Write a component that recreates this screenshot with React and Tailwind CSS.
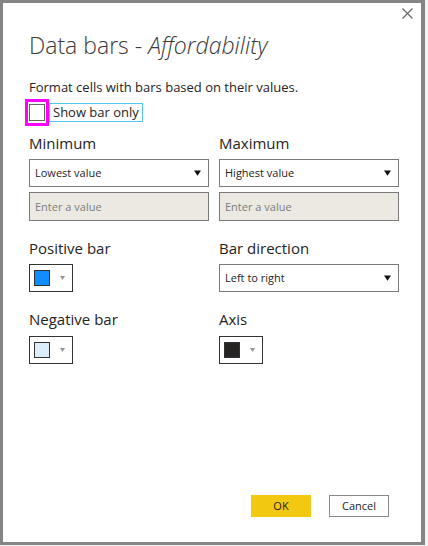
import { useState } from 'react';

const font = { fontFamily: '"Open Sans", "Noto Sans", sans-serif' };

function Caret({ className = '', w = 8, h = 6 }) {
  return (
    <svg width={w} height={h} viewBox="0 0 8 6" className={className}>
      <path d="M0 0 L8 0 L4 6 Z" fill="currentColor" />
    </svg>
  );
}

function Select({ value }) {
  return (
    <div className="flex h-[28px] items-center justify-between border border-[#7a7a7a] bg-white pl-[5px] pr-[7px] text-[11px] text-[#252423]">
      <span>{value}</span>
      <Caret className="text-[#111]" w={7} h={6} />
    </div>
  );
}

function ValueInput() {
  return (
    <input
      placeholder="Enter a value"
      className="h-[29px] w-full border border-[#7a7a7a] bg-[#ebe9e2] px-[5px] text-[11px] text-[#252423] outline-none placeholder:text-[#7d7d7d]"
    />
  );
}

function ColorPicker({ color }) {
  return (
    <div className="flex h-[28px] w-[44px] items-center border border-[#333] bg-white pl-[4px]">
      <div className="h-[16px] w-[16px] border border-[#333]" style={{ background: color }} />
      <Caret className="ml-[9px] text-[#9a9a9a]" w={7} h={4} />
    </div>
  );
}

function Label({ children }) {
  return <div className="h-[21px] text-[15px] leading-[21px] text-[#252423]">{children}</div>;
}

export default function App() {
  const [barOnly, setBarOnly] = useState(false);

  return (
    <div className="h-[546px] w-[428px] bg-[#f3f3f3]" style={font}>
      <div className="flex h-[545px] w-[425px] flex-col border-[3px] border-r-[4px] border-[#858585] bg-white pl-[26px] pr-[22px]">
        <div className="-mr-[14px] flex h-[26px] justify-end pt-[5px]">
          <svg width="11" height="11" viewBox="0 0 11 11" className="text-[#666]">
            <path d="M0.5 0.5 L10.5 10.5 M10.5 0.5 L0.5 10.5" stroke="currentColor" strokeWidth="1.2" />
          </svg>
        </div>

        <h1 className="h-[32px] text-[23px] font-light leading-[32px] text-[#3b3a39]">
          Data bars - <span className="italic">Affordability</span>
        </h1>

        <p className="mt-[16px] h-[20px] text-[13px] leading-[20px] text-[#252423]">
          Format cells with bars based on their values.
        </p>

        <label className="mt-[2px] flex h-[27px] items-center">
          <span className="-ml-[4px] flex h-[27px] w-[24px] items-center justify-center border-[3px] border-[#ff00ff]">
            <input
              type="checkbox"
              checked={barOnly}
              onChange={(e) => setBarOnly(e.target.checked)}
              className="h-[17px] w-[16px] appearance-none border border-[#666] bg-white"
            />
          </span>
          <span className="flex h-[19px] items-center border border-[#55c6f0] px-[3px] text-[13px] text-[#252423]">
            Show bar only
          </span>
        </label>

        <div className="mt-[7px] grid grid-cols-2 gap-x-[10px]">
          <div>
            <Label>Minimum</Label>
            <div className="mt-[5px]">
              <Select value="Lowest value" />
            </div>
            <div className="mt-[5px]">
              <ValueInput />
            </div>
          </div>
          <div>
            <Label>Maximum</Label>
            <div className="mt-[5px]">
              <Select value="Highest value" />
            </div>
            <div className="mt-[5px]">
              <ValueInput />
            </div>
          </div>

          <div className="mt-[17px]">
            <Label>Positive bar</Label>
            <div className="mt-[5px]">
              <ColorPicker color="#118dff" />
            </div>
          </div>
          <div className="mt-[17px]">
            <Label>Bar direction</Label>
            <div className="mt-[5px]">
              <Select value="Left to right" />
            </div>
          </div>

          <div className="mt-[17px]">
            <Label>Negative bar</Label>
            <div className="mt-[6px]">
              <ColorPicker color="#deedfa" />
            </div>
          </div>
          <div className="mt-[17px]">
            <Label>Axis</Label>
            <div className="mt-[6px]">
              <ColorPicker color="#252423" />
            </div>
          </div>
        </div>

        <div className="mt-auto mb-[25px] flex justify-end gap-[18px] pr-[10px]">
          <button className="h-[22px] w-[60px] bg-[#f2c811] text-[11px] text-[#252423]">OK</button>
          <button className="h-[22px] w-[60px] border border-[#8a8a8a] bg-white text-[11px] text-[#252423]">
            Cancel
          </button>
        </div>
      </div>
    </div>
  );
}
